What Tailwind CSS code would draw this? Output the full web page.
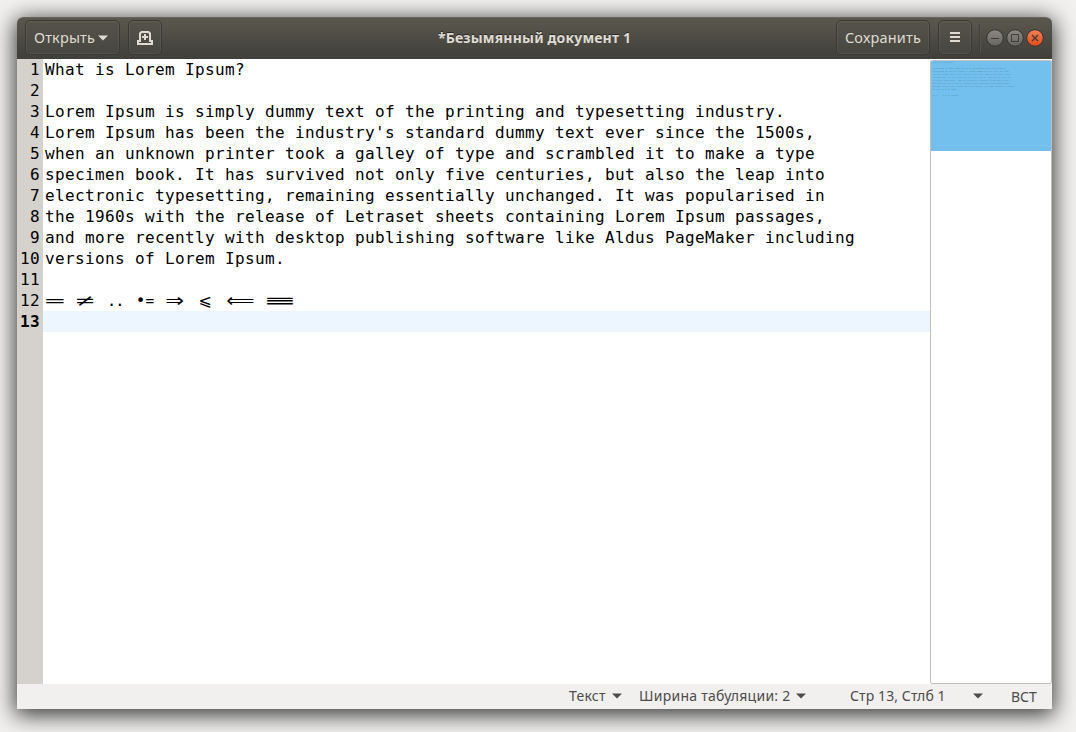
<!DOCTYPE html>
<html lang="ru">
<head>
<meta charset="utf-8">
<title>*Безымянный документ 1</title>
<script src="https://cdn.jsdelivr.net/npm/@tailwindcss/browser@4"></script>
</head>
<body class="h-[732px] w-[1076px] overflow-hidden bg-[#f2f1f0] pt-[17px] pl-[17px] font-['Noto_Sans','Open_Sans',sans-serif]">
<div class="flex h-[692px] w-[1035px] flex-col rounded-t-[6px] bg-white shadow-[0_4px_22px_2px_rgba(0,0,0,0.78)]">
  <header class="flex h-[42px] shrink-0 items-start rounded-t-[6px] border-t border-[#66645b] bg-linear-to-b from-[#5a584e] to-[#403f3a] pt-[2px] pl-2 text-[14.5px] text-[#dfdbd2] [text-shadow:0_-1px_0_rgba(0,0,0,0.5)]">
    <button class="flex h-[35px] w-[95px] items-center rounded-[5px] border border-[#3a3934] bg-linear-to-b from-[#55534a] to-[#474640] pl-2 shadow-[inset_0_0_0_1px_rgba(255,255,255,0.06)]">
      <span class="w-[62px] text-left tracking-[0.15px] whitespace-nowrap">Открыть</span>
      <svg class="ml-[2px]" width="10" height="6" viewBox="0 0 10 6"><path d="M0 .5h10L5 5.5z" fill="#dfdbd2"/></svg>
    </button>
    <button class="ml-2 flex h-[35px] w-[34px] items-center justify-center rounded-[5px] border border-[#3a3934] bg-linear-to-b from-[#55534a] to-[#474640] shadow-[inset_0_0_0_1px_rgba(255,255,255,0.06)]">
      <svg class="mt-[1px]" width="16" height="14" viewBox="0 0 16 14"><path d="M3 10V2.500L4.500 1h7L13 2.500V10" fill="none" stroke="#dfdbd2" stroke-width="2"/><path d="M7 3h2v2h2v2H9v2H7V7H5V5h2zM0 9h4v3h8V9h4v5H0z" fill="#dfdbd2"/><path d="M2 11h12v1H2z" fill="#4c4a43"/></svg>
    </button>
    <h1 class="w-[674px] pt-[8px] pl-[276px] text-[14px] leading-[20px] font-bold tracking-[0.16px] whitespace-nowrap">*Безымянный документ 1</h1>
    <button class="flex h-[35px] w-[94px] items-center justify-center rounded-[5px] border border-[#3a3934] bg-linear-to-b from-[#55534a] to-[#474640] tracking-[0.2px] shadow-[inset_0_0_0_1px_rgba(255,255,255,0.06)]">Сохранить</button>
    <button class="ml-2 flex h-[35px] w-[34px] items-center justify-center rounded-[5px] border border-[#3a3934] bg-linear-to-b from-[#55534a] to-[#474640] shadow-[inset_0_0_0_1px_rgba(255,255,255,0.06)]">
      <svg class="-mt-[1px]" width="10" height="10" viewBox="0 0 10 10"><path d="M0 0h10v2H0zM0 4h10v2H0zM0 8h10v2H0z" fill="#dfdbd2"/></svg>
    </button>
    <i class="mt-1 ml-[7px] h-7 w-px bg-[#403f3a]"></i><i class="mt-1 h-7 w-px bg-[#57554c]"></i>
    <div class="mt-[9px] ml-[5px] flex gap-[2px]">
      <svg width="18" height="18" viewBox="0 0 18 18"><defs><linearGradient id="g" x2="0" y2="1"><stop stop-color="#8b8980"/><stop offset="1" stop-color="#65645e"/></linearGradient><linearGradient id="o" x2="0" y2="1"><stop stop-color="#f58058"/><stop offset="1" stop-color="#e24a18"/></linearGradient></defs><circle cx="9" cy="9" r="8.300" fill="url(#g)" stroke="#34332f"/><path d="M5 9.500h8" stroke="#3c3b37"/></svg>
      <svg width="18" height="18" viewBox="0 0 18 18"><circle cx="9" cy="9" r="8.300" fill="url(#g)" stroke="#34332f"/><path d="M5.500 5.500h7v7h-7z" fill="none" stroke="#3c3b37"/></svg>
      <svg width="18" height="18" viewBox="0 0 18 18"><circle cx="9" cy="9" r="8.300" fill="url(#o)" stroke="#34332f"/><path d="M6 6l6 6M12 6l-6 6" fill="none" stroke="#3c3b37" stroke-width="1.300"/></svg>
    </div>
  </header>
  <main class="flex h-[625px] shrink-0 font-['DejaVu_Sans_Mono',monospace] text-[16px] leading-[21px] tracking-[0.367px] text-black">
    <div class="w-[26px] shrink-0 bg-[#d5d1cd] pr-[3px] text-right whitespace-pre">1
2
3
4
5
6
7
8
9
10
11
12
<b>13</b></div>
    <div class="w-[887px] shrink-0">
      <div class="h-[231px] pl-[2px] whitespace-pre">What is Lorem Ipsum?

Lorem Ipsum is simply dummy text of the printing and typesetting industry.
Lorem Ipsum has been the industry's standard dummy text ever since the 1500s,
when an unknown printer took a galley of type and scrambled it to make a type
specimen book. It has survived not only five centuries, but also the leap into
electronic typesetting, remaining essentially unchanged. It was popularised in
the 1960s with the release of Letraset sheets containing Lorem Ipsum passages,
and more recently with desktop publishing software like Aldus PageMaker including
versions of Lorem Ipsum.
</div>
      <div class="flex h-[21px] gap-[10px] pl-[2px] text-center tracking-normal">
        <span class="flex w-5 justify-center"><span class="inline-block scale-x-[2.100]">=</span></span>
        <span class="flex w-5 justify-center font-['DejaVu_Sans']"><span class="inline-block scale-x-[1.600]">≠</span></span>
        <span class="flex w-5 justify-center tracking-[-1.500px]">..</span>
        <span class="flex w-5 items-center justify-center"><span class="-mr-[1px]">•</span><span class="inline-block scale-x-[.9]">=</span></span>
        <span class="flex w-5 justify-center font-['DejaVu_Sans']"><span class="inline-block scale-x-[1.400] scale-y-[1.200]">⇒</span></span>
        <span class="flex w-5 justify-center font-['DejaVu_Sans']"><span class="inline-block">⩽</span></span>
        <span class="flex w-[30px] justify-center font-['DejaVu_Sans']"><span class="inline-block scale-x-[1.220] scale-y-[1.200]">⟸</span></span>
        <span class="flex w-[30px] justify-center"><span class="inline-block scale-x-[3.100]">≡</span></span>
      </div>
      <div class="h-[21px] bg-[#edf5ff]"></div>
    </div>
    <aside class="mt-px h-[624px] w-[122px] shrink-0 overflow-hidden rounded-[2px] border border-[#c3c0bc]">
      <div class="h-[90px] bg-[#73c0ee] pl-[2px] font-['DejaVu_Sans_Mono',monospace] text-[1.660px] leading-[3px] tracking-normal whitespace-pre text-[#27566f]/60">What is Lorem Ipsum?

Lorem Ipsum is simply dummy text of the printing and typesetting industry.
Lorem Ipsum has been the industry's standard dummy text ever since the 1500s,
when an unknown printer took a galley of type and scrambled it to make a type
specimen book. It has survived not only five centuries, but also the leap into
electronic typesetting, remaining essentially unchanged. It was popularised in
the 1960s with the release of Letraset sheets containing Lorem Ipsum passages,
and more recently with desktop publishing software like Aldus PageMaker including
versions of Lorem Ipsum.

== != .. := =&gt; &lt;= &lt;== ===</div>
    </aside>
  </main>
  <footer class="flex h-[25px] shrink-0 items-center bg-[#f1f0ee] pb-[2px] pl-[552px] text-[14px] leading-[20px] whitespace-nowrap text-[#4c4c4c]">
    <span class="w-[43px] tracking-[0.25px]">Текст</span>
    <svg width="10" height="6" viewBox="0 0 10 6"><path d="M0 .5h10L5 5.500z" fill="#4c4c4c"/></svg>
    <span class="ml-[17px] w-[157px] tracking-[0.25px]">Ширина табуляции: 2</span>
    <svg width="10" height="6" viewBox="0 0 10 6"><path d="M0 .5h10L5 5.500z" fill="#4c4c4c"/></svg>
    <span class="ml-[44px] w-[123px] tracking-[0.1px]">Стр 13, Стлб 1</span>
    <svg width="10" height="6" viewBox="0 0 10 6"><path d="M0 .5h10L5 5.500z" fill="#4c4c4c"/></svg>
    <span class="ml-[28px] pt-[2px]">ВСТ</span>
  </footer>
</div>
</body>
</html>
